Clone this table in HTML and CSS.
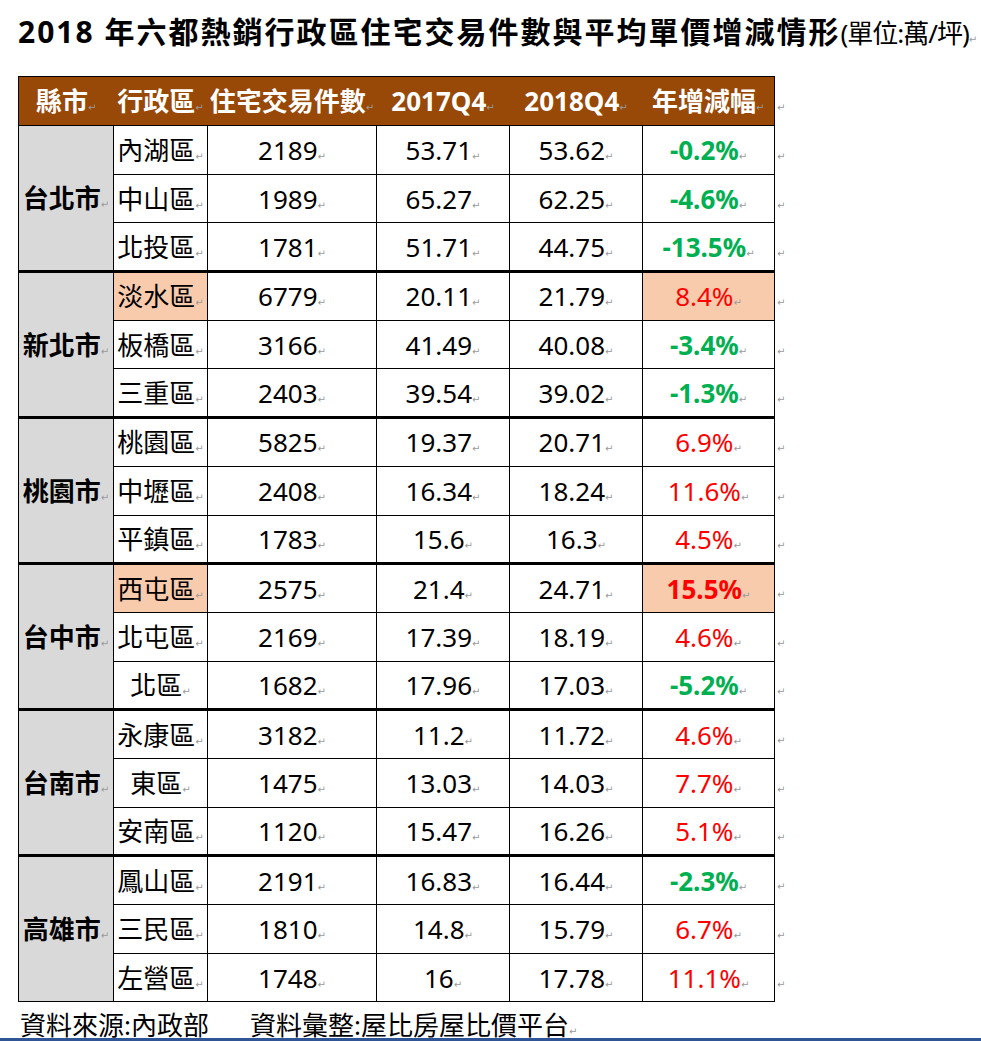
FILE: index.html
```html
<!DOCTYPE html>
<html lang="zh-Hant">
<head>
<meta charset="utf-8">
<title>2018 年六都熱銷行政區住宅交易件數與平均單價增減情形</title>
<link rel="stylesheet" href="styles.css">
</head>
<body>
<div class="page">
  <h1 class="title">2018 年六都熱銷行政區住宅交易件數與平均單價增減情形<span class="unit">(單位:萬/坪)</span><span class="mk">↵</span></h1>
  <table class="tbl">
    <colgroup>
      <col class="c1"><col class="c2"><col class="c3"><col class="c4"><col class="c5"><col class="c6"><col class="c7">
    </colgroup>
    <thead>
      <tr>
        <th class="first">縣市<span class="mk">↵</span></th>
        <th>行政區<span class="mk">↵</span></th>
        <th>住宅交易件數<span class="mk">↵</span></th>
        <th>2017Q4<span class="mk">↵</span></th>
        <th>2018Q4<span class="mk">↵</span></th>
        <th class="last">年增減幅<span class="mk">↵</span></th>
        <td class="end"><span class="mk">↵</span></td>
      </tr>
    </thead>
    <tbody class="grp">
      <tr><td rowspan="3" class="city">台北市<span class="mk">↵</span></td><td>內湖區<span class="mk">↵</span></td><td>2189<span class="mk">↵</span></td><td>53.71<span class="mk">↵</span></td><td>53.62<span class="mk">↵</span></td><td class="dn">-0.2%<span class="mk">↵</span></td><td class="end"><span class="mk">↵</span></td></tr>
      <tr><td>中山區<span class="mk">↵</span></td><td>1989<span class="mk">↵</span></td><td>65.27<span class="mk">↵</span></td><td>62.25<span class="mk">↵</span></td><td class="dn">-4.6%<span class="mk">↵</span></td><td class="end"><span class="mk">↵</span></td></tr>
      <tr><td>北投區<span class="mk">↵</span></td><td>1781<span class="mk">↵</span></td><td>51.71<span class="mk">↵</span></td><td>44.75<span class="mk">↵</span></td><td class="dn">-13.5%<span class="mk">↵</span></td><td class="end"><span class="mk">↵</span></td></tr>
    </tbody>
    <tbody class="grp">
      <tr><td rowspan="3" class="city">新北市<span class="mk">↵</span></td><td class="hl">淡水區<span class="mk">↵</span></td><td>6779<span class="mk">↵</span></td><td>20.11<span class="mk">↵</span></td><td>21.79<span class="mk">↵</span></td><td class="up hl">8.4%<span class="mk">↵</span></td><td class="end"><span class="mk">↵</span></td></tr>
      <tr><td>板橋區<span class="mk">↵</span></td><td>3166<span class="mk">↵</span></td><td>41.49<span class="mk">↵</span></td><td>40.08<span class="mk">↵</span></td><td class="dn">-3.4%<span class="mk">↵</span></td><td class="end"><span class="mk">↵</span></td></tr>
      <tr><td>三重區<span class="mk">↵</span></td><td>2403<span class="mk">↵</span></td><td>39.54<span class="mk">↵</span></td><td>39.02<span class="mk">↵</span></td><td class="dn">-1.3%<span class="mk">↵</span></td><td class="end"><span class="mk">↵</span></td></tr>
    </tbody>
    <tbody class="grp">
      <tr><td rowspan="3" class="city">桃園市<span class="mk">↵</span></td><td>桃園區<span class="mk">↵</span></td><td>5825<span class="mk">↵</span></td><td>19.37<span class="mk">↵</span></td><td>20.71<span class="mk">↵</span></td><td class="up">6.9%<span class="mk">↵</span></td><td class="end"><span class="mk">↵</span></td></tr>
      <tr><td>中壢區<span class="mk">↵</span></td><td>2408<span class="mk">↵</span></td><td>16.34<span class="mk">↵</span></td><td>18.24<span class="mk">↵</span></td><td class="up">11.6%<span class="mk">↵</span></td><td class="end"><span class="mk">↵</span></td></tr>
      <tr><td>平鎮區<span class="mk">↵</span></td><td>1783<span class="mk">↵</span></td><td>15.6<span class="mk">↵</span></td><td>16.3<span class="mk">↵</span></td><td class="up">4.5%<span class="mk">↵</span></td><td class="end"><span class="mk">↵</span></td></tr>
    </tbody>
    <tbody class="grp">
      <tr><td rowspan="3" class="city">台中市<span class="mk">↵</span></td><td class="hl">西屯區<span class="mk">↵</span></td><td>2575<span class="mk">↵</span></td><td>21.4<span class="mk">↵</span></td><td>24.71<span class="mk">↵</span></td><td class="up strong hl">15.5%<span class="mk">↵</span></td><td class="end"><span class="mk">↵</span></td></tr>
      <tr><td>北屯區<span class="mk">↵</span></td><td>2169<span class="mk">↵</span></td><td>17.39<span class="mk">↵</span></td><td>18.19<span class="mk">↵</span></td><td class="up">4.6%<span class="mk">↵</span></td><td class="end"><span class="mk">↵</span></td></tr>
      <tr><td>北區<span class="mk">↵</span></td><td>1682<span class="mk">↵</span></td><td>17.96<span class="mk">↵</span></td><td>17.03<span class="mk">↵</span></td><td class="dn">-5.2%<span class="mk">↵</span></td><td class="end"><span class="mk">↵</span></td></tr>
    </tbody>
    <tbody class="grp">
      <tr><td rowspan="3" class="city">台南市<span class="mk">↵</span></td><td>永康區<span class="mk">↵</span></td><td>3182<span class="mk">↵</span></td><td>11.2<span class="mk">↵</span></td><td>11.72<span class="mk">↵</span></td><td class="up">4.6%<span class="mk">↵</span></td><td class="end"><span class="mk">↵</span></td></tr>
      <tr><td>東區<span class="mk">↵</span></td><td>1475<span class="mk">↵</span></td><td>13.03<span class="mk">↵</span></td><td>14.03<span class="mk">↵</span></td><td class="up">7.7%<span class="mk">↵</span></td><td class="end"><span class="mk">↵</span></td></tr>
      <tr><td>安南區<span class="mk">↵</span></td><td>1120<span class="mk">↵</span></td><td>15.47<span class="mk">↵</span></td><td>16.26<span class="mk">↵</span></td><td class="up">5.1%<span class="mk">↵</span></td><td class="end"><span class="mk">↵</span></td></tr>
    </tbody>
    <tbody class="grp">
      <tr><td rowspan="3" class="city">高雄市<span class="mk">↵</span></td><td>鳳山區<span class="mk">↵</span></td><td>2191<span class="mk">↵</span></td><td>16.83<span class="mk">↵</span></td><td>16.44<span class="mk">↵</span></td><td class="dn">-2.3%<span class="mk">↵</span></td><td class="end"><span class="mk">↵</span></td></tr>
      <tr><td>三民區<span class="mk">↵</span></td><td>1810<span class="mk">↵</span></td><td>14.8<span class="mk">↵</span></td><td>15.79<span class="mk">↵</span></td><td class="up">6.7%<span class="mk">↵</span></td><td class="end"><span class="mk">↵</span></td></tr>
      <tr><td>左營區<span class="mk">↵</span></td><td>1748<span class="mk">↵</span></td><td>16<span class="mk">↵</span></td><td>17.78<span class="mk">↵</span></td><td class="up">11.1%<span class="mk">↵</span></td><td class="end"><span class="mk">↵</span></td></tr>
    </tbody>
  </table>
  <p class="source"><span>資料來源:內政部</span><span>資料彙整:屋比房屋比價平台<span class="mk">↵</span></span></p>
</div>
<div class="rule"></div>
</body>
</html>
```

FILE: styles.css
```css
html, body {
  margin: 0;
  padding: 0;
  background: #ffffff;
}

body {
  font-family: "Noto Sans", "Noto Sans CJK TC", sans-serif;
  color: #000000;
  width: 981px;
  height: 1041px;
  overflow: hidden;
  display: flex;
  flex-direction: column;
}

.page {
  flex: none;
  padding: 17px 0 0 18px;
}

.title {
  margin: 0;
  font-size: 30px;
  line-height: 30px;
  font-weight: 700;
  letter-spacing: 2px;
  white-space: nowrap;
}

.title .unit {
  font-size: 26px;
  font-weight: 400;
  letter-spacing: -1px;
}

.mk {
  font-family: "DejaVu Sans", sans-serif;
  font-size: 10px;
  line-height: 0;
  font-weight: 400;
  color: #9a9a9a;
  letter-spacing: 0;
}

.tbl {
  margin-top: 28px;
  border-collapse: collapse;
  table-layout: fixed;
  width: 777px;
  font-size: 26px;
  line-height: 30px;
}

.c1 { width: 95px; }
.c2 { width: 94px; }
.c3 { width: 169px; }
.c4 { width: 133px; }
.c5 { width: 133px; }
.c6 { width: 132px; }
.c7 { width: 21px; }

.tbl th,
.tbl td {
  padding: 0;
  text-align: center;
  vertical-align: middle;
  white-space: nowrap;
}

.tbl thead tr {
  height: 49px;
}

.tbl tbody tr {
  height: 48.7px;
}

.tbl th {
  background: #984807;
  color: #ffffff;
  font-weight: 700;
  border-top: 1px solid #000000;
  border-bottom: 1px solid #000000;
}

.tbl th.first { border-left: 1px solid #000000; }
.tbl th.last { border-right: 1px solid #000000; }

.tbl td {
  border: 1px solid #000000;
}

.tbl .grp tr:first-child td {
  border-top: 3px solid #000000;
}

.tbl .grp:first-of-type tr:first-child td {
  border-top: 1px solid #000000;
}

.tbl td.end,
.tbl .grp tr:first-child td.end {
  border: none;
  text-align: left;
  padding-left: 2px;
}

.tbl td.city {
  background: #d9d9d9;
  font-weight: 700;
}

.tbl td.hl {
  background: #f8cbad;
}

.tbl td.dn {
  color: #00b050;
  font-weight: 700;
}

.tbl td.up {
  color: #ff0000;
}

.tbl td.strong {
  font-weight: 700;
}

.source {
  margin: 10px 0 0 2px;
  font-size: 26px;
  line-height: 26px;
  display: flex;
  gap: 41px;
  white-space: nowrap;
}

.rule {
  flex: none;
  margin-top: auto;
  height: 3px;
  background: #2f5597;
}
```
